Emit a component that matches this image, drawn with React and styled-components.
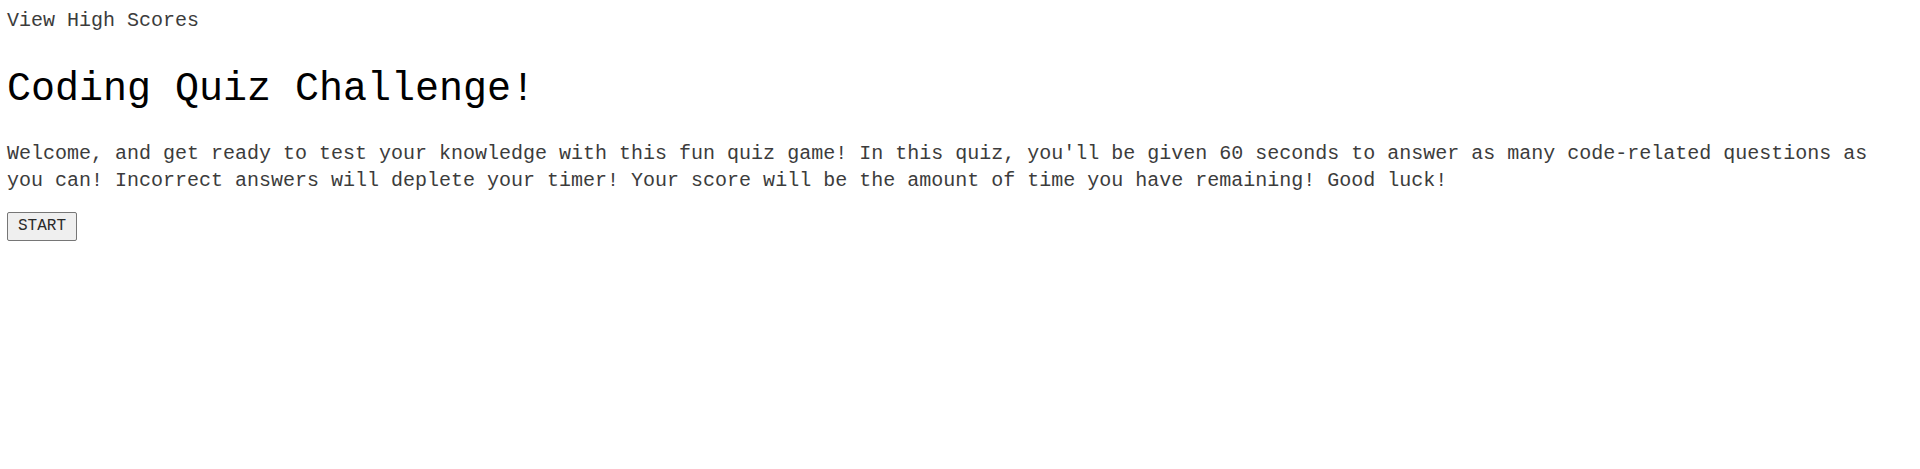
import React from "react";
import styled, { createGlobalStyle } from "styled-components";

const GlobalStyle = createGlobalStyle`
  html, body {
    margin: 0;
    padding: 0;
    background: #ffffff;
  }
  body {
    font-family: "Liberation Mono", "DejaVu Sans Mono", monospace;
    color: #1a1a1a;
  }
`;

const Page = styled.div`
  display: flex;
  flex-direction: column;
  align-items: flex-start;
  padding: 8px 7px 0;
`;

const Header = styled.header`
  display: flex;
`;

const ScoresLink = styled.a`
  font-size: 20px;
  line-height: 26.4px;
  color: #3c3c3c;
  text-decoration: none;
  cursor: pointer;
`;

const Title = styled.h1`
  margin: 30px 0 0;
  font-size: 40px;
  line-height: 52.8px;
  font-weight: 400;
  color: #000000;
`;

const Intro = styled.p`
  margin: 24px 0 0;
  font-size: 20px;
  line-height: 26.4px;
  color: #3c3c3c;
`;

const StartButton = styled.button`
  margin-top: 18px;
  font-family: inherit;
  font-size: 16px;
  line-height: 21px;
  padding: 3px 10px;
  color: #2a2a2a;
  background: #efefef;
  border: 1px solid #767676;
  border-radius: 2px;
  cursor: pointer;
`;

export default function App() {
  return (
    <>
      <GlobalStyle />
      <Page>
        <Header>
          <ScoresLink>View High Scores</ScoresLink>
        </Header>
        <Title>Coding Quiz Challenge!</Title>
        <Intro>
          Welcome, and get ready to test your knowledge with this fun quiz game! In this quiz, you'll be given 60 seconds to answer as many code-related questions as you can! Incorrect answers will deplete your timer! Your score will be the amount of time you have remaining! Good luck!
        </Intro>
        <StartButton>START</StartButton>
      </Page>
    </>
  );
}
